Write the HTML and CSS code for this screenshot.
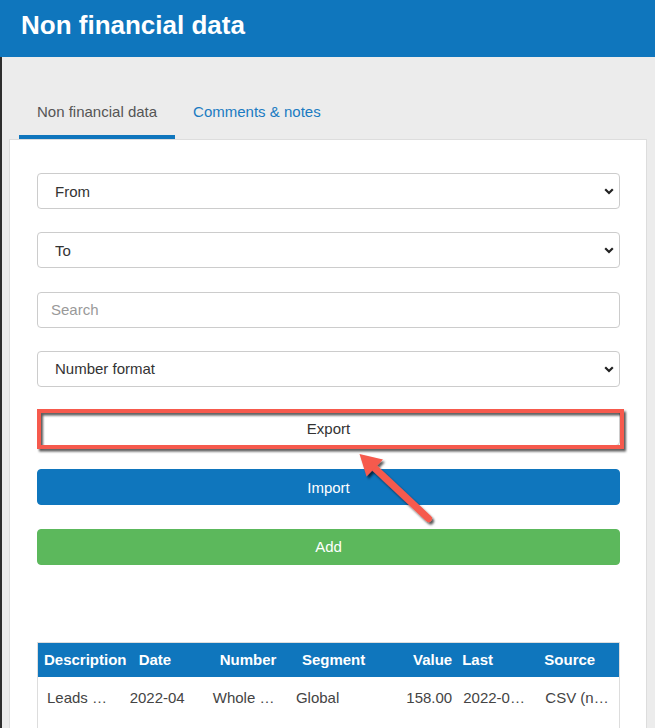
FILE: index.html
```html
<!DOCTYPE html>
<html lang="en">
  <head>
    <meta charset="UTF-8" />
    <meta name="viewport" content="width=device-width, initial-scale=1.0" />
    <title>Non financial data</title>
    <link rel="stylesheet" href="styles.css">
  </head>
  <body>
    <header class="topbar">
      <h1>Non financial data</h1>
    </header>

    <main class="page">
      <nav class="tabs">
        <a href="#" class="tab active">Non financial data</a>
        <a href="#" class="tab">Comments &amp; notes</a>
      </nav>

      <section class="panel">
        <div class="form">
          <!-- filters -->
          <div class="select-control">
            <select name="from"><option>From</option></select>
            <svg class="chevron" width="10" height="7" viewBox="0 0 10 7">
              <path d="M1.2 1.2 L5 5 L8.8 1.2" />
            </svg>
          </div>
          <div class="select-control">
            <select name="to"><option>To</option></select>
            <svg class="chevron" width="10" height="7" viewBox="0 0 10 7">
              <path d="M1.2 1.2 L5 5 L8.8 1.2" />
            </svg>
          </div>
          <input type="text" class="input" name="search" placeholder="Search" />
          <div class="select-control">
            <select name="numberFormat"><option>Number format</option></select>
            <svg class="chevron" width="10" height="7" viewBox="0 0 10 7">
              <path d="M1.2 1.2 L5 5 L8.8 1.2" />
            </svg>
          </div>

          <!-- actions -->
          <button type="button" class="btn btn-default">Export</button>
          <button type="button" class="btn btn-primary">Import</button>
          <button type="button" class="btn btn-success">Add</button>
        </div>

        <table class="data-table">
          <colgroup>
            <col style="width: 84px" />
            <col style="width: 83px" />
            <col style="width: 83px" />
            <col style="width: 83px" />
            <col style="width: 84px" />
            <col style="width: 82px" />
            <col style="width: 82px" />
          </colgroup>
          <thead>
            <tr>
              <th>Description</th>
              <th>Date</th>
              <th>Number</th>
              <th>Segment</th>
              <th class="num">Value</th>
              <th>Last</th>
              <th>Source</th>
            </tr>
          </thead>
          <tbody>
            <tr>
              <td>Leads …</td>
              <td>2022-04</td>
              <td>Whole …</td>
              <td>Global</td>
              <td class="num">158.00</td>
              <td>2022-0…</td>
              <td>CSV (n…</td>
            </tr>
          </tbody>
        </table>
      </section>
    </main>

    <!-- screenshot annotation -->
    <svg class="annotation" width="655" height="728" viewBox="0 0 655 728">
      <defs>
        <filter id="shadow" x="-10%" y="-10%" width="120%" height="130%">
          <feDropShadow dx="2" dy="2.5" stdDeviation="1.2" flood-color="#000" flood-opacity="0.65" />
        </filter>
      </defs>
      <g filter="url(#shadow)">
        <rect x="39" y="411" width="583" height="36" fill="none" stroke="#f65a4d" stroke-width="4" />
        <line x1="428.5" y1="518.5" x2="373" y2="466.5" stroke="#f65a4d" stroke-width="7" stroke-linecap="round" />
        <polygon points="359.5,454 383,459.5 366.5,476.5" fill="#f65a4d" />
      </g>
    </svg>
  </body>
</html>
```

FILE: styles.css
```css
* {
  box-sizing: border-box;
  margin: 0;
  padding: 0;
}

:root {
  --blue: #0f76bd;
  --green: #5cb85c;
  --text: #333;
  --border: #ccc;
  --background: #ececec;
}

html,
body {
  height: 728px;
  overflow: hidden;
}

body {
  font-family: 'Liberation Sans', Arial, sans-serif;
  font-size: 15px;
  color: var(--text);
  background-color: var(--background);
}

.topbar {
  height: 57px;
  padding: 12px 21px 0;
  background-color: var(--blue);
}

.topbar h1 {
  font-size: 26px;
  line-height: 26px;
  font-weight: 700;
  color: white;
}

.page {
  height: 671px;
  border-left: 2px solid #2e2e2e;
  padding: 34px 8px 0 7px;
}

.tabs {
  display: flex;
  margin-left: 10px;
}

.tab {
  display: block;
  padding: 11px 18px 13px;
  line-height: 20px;
  border-bottom: 4px solid transparent;
  color: #1a7bc2;
  text-decoration: none;
}

.tab.active {
  color: #555;
  border-bottom-color: var(--blue);
}

.panel {
  height: 600px;
  background-color: white;
  border: 1px solid #ddd;
  padding: 33px 26px 0 27px;
}

.form {
  display: flex;
  flex-direction: column;
  gap: 23.3px;
}

.select-control {
  position: relative;
}

select,
.input {
  display: block;
  width: 100%;
  height: 36px;
  border: 1px solid var(--border);
  border-radius: 4px;
  background-color: white;
  font-family: inherit;
  font-size: 15px;
  color: var(--text);
  outline: none;
}

select {
  appearance: none;
  padding-left: 17px;
}

.input {
  padding-left: 13px;
}

.input::placeholder {
  color: #999;
}

.chevron {
  position: absolute;
  right: 6px;
  top: 15px;
  pointer-events: none;
}

.chevron path {
  fill: none;
  stroke: #222;
  stroke-width: 2.2;
}

.btn {
  display: block;
  width: 100%;
  height: 36px;
  border-radius: 4px;
  font-family: inherit;
  font-size: 15px;
  cursor: pointer;
}

.btn-default {
  background-color: white;
  border: 1px solid var(--border);
  color: var(--text);
}

.btn-primary {
  background-color: var(--blue);
  border: 1px solid var(--blue);
  color: white;
}

.btn-success {
  background-color: var(--green);
  border: 1px solid var(--green);
  color: white;
}

.data-table {
  width: 583px;
  margin-top: 77px;
  border: 1px solid #ddd;
  border-collapse: collapse;
  table-layout: fixed;
}

.data-table th {
  background-color: var(--blue);
  color: white;
  font-weight: 700;
  text-align: left;
  line-height: 20px;
  padding: 7px 6px;
  white-space: nowrap;
}

.data-table th:nth-child(2) {
  padding-left: 17px;
}

.data-table th:nth-child(3) {
  padding-left: 15px;
}

.data-table th:nth-child(4) {
  padding-left: 14px;
}

.data-table th:nth-child(6),
.data-table th:nth-child(7) {
  padding-left: 7px;
}

.data-table td {
  line-height: 20px;
  padding: 11px 8px 40px;
  white-space: nowrap;
  overflow: hidden;
  color: #444;
}

.data-table td:first-child {
  padding-left: 9px;
}

.data-table .num {
  text-align: right;
  padding-right: 3px;
}

.annotation {
  position: absolute;
  top: 0;
  left: 0;
  pointer-events: none;
}
```
